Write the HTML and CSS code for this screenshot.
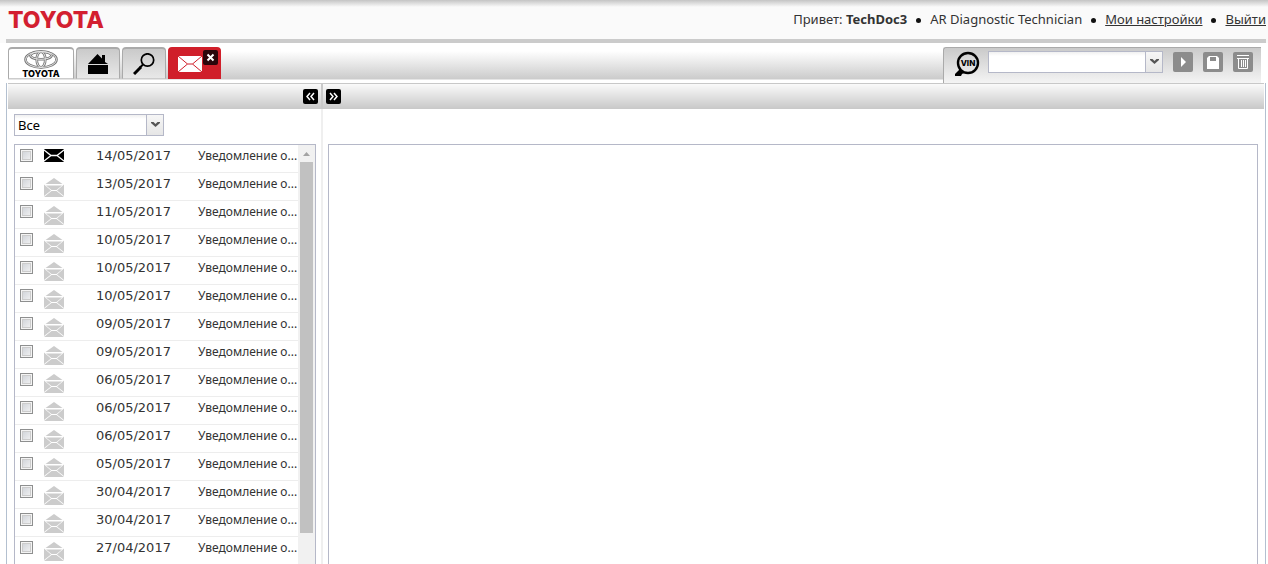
FILE: index.html
```html
<!DOCTYPE html>
<html lang="ru">
<head>
  <meta charset="UTF-8">
  <meta name="viewport" content="width=device-width, initial-scale=1.0">
  <title>Toyota TechDoc</title>
  <link rel="stylesheet" href="styles.css">
</head>
<body>

<svg class="sprite" aria-hidden="true">
  <symbol id="mail-new" viewBox="0 0 20 13">
    <rect width="20" height="13" rx="1"/>
    <path d="M0 1l7 5.500h6L20 1M0 12l7-5.500M20 12l-7-5.500" fill="none" stroke="#fff" stroke-width="1.300"/>
  </symbol>
  <symbol id="mail-read" viewBox="0 0 20 19">
    <path d="M10 0l8.500 6h-17z"/>
    <path d="M0 6.500L7 12.500 0 18zM20 6.500L13 12.500l7 5.500zM2 7.500h16L12.500 12h-5zM0 19l7.500-6h5L20 19z"/>
  </symbol>
  <symbol id="chevron" viewBox="0 0 9 6">
    <path d="M0 0h2.500l2 2 2-2H9v1L4.500 5 0 1z"/>
  </symbol>
</svg>

<header>
  <div class="logo">TOYOTA</div>
  <div class="user">
    <span>Привет: <strong>TechDoc3</strong></span>
    <i class="dot"></i>
    <span>AR Diagnostic Technician</span>
    <i class="dot"></i>
    <a href="#settings">Мои настройки</a>
    <i class="dot"></i>
    <a href="#logout">Выйти</a>
  </div>
</header>

<div class="toolbar">
  <nav class="tabs">
    <a class="tab tab-brand" href="#brand" aria-label="Toyota">
      <svg width="34" height="19" viewBox="0 0 34 19" fill="none">
        <g stroke="#777" stroke-width="2.600">
          <ellipse cx="17" cy="9.500" rx="15.500" ry="8"/>
          <ellipse cx="17" cy="5.500" rx="10.500" ry="3.800"/>
          <ellipse cx="17" cy="9.500" rx="4.300" ry="7.800"/>
        </g>
        <g stroke="#e4e4e4" stroke-width="1">
          <ellipse cx="17" cy="9.500" rx="15.500" ry="8"/>
          <ellipse cx="17" cy="5.500" rx="10.500" ry="3.800"/>
          <ellipse cx="17" cy="9.500" rx="4.300" ry="7.800"/>
        </g>
      </svg>
      <span>TOYOTA</span>
    </a>
    <a class="tab" href="#home" aria-label="Главная">
      <svg width="20" height="20" viewBox="0 0 20 20"><path d="M0 10L9.500 0l4.500 4.500V1h3v7l3 2zM0 11h20v9H0z"/></svg>
    </a>
    <a class="tab" href="#search" aria-label="Поиск">
      <svg width="22" height="22" viewBox="0 0 22 22" fill="none" stroke="#000">
        <circle cx="14.500" cy="7" r="6.200" stroke-width="1.700"/>
        <path d="M10 11.500L7 14.500" stroke-width="2"/>
        <path d="M8 14L1 21" stroke-width="3"/>
      </svg>
    </a>
    <div class="tab tab-active">
      <a href="#messages" aria-label="Сообщения">
        <svg width="24" height="16" viewBox="0 0 24 16">
          <path d="M0 0h24v16H0z" fill="#fff"/>
          <path d="M0 0l9.500 8h5L24 0M0 16l9.500-8M24 16l-9.500-8" fill="none" stroke="#d01f2a" stroke-width="1"/>
        </svg>
      </a>
      <button class="close" aria-label="Закрыть">
        <svg width="9" height="9" viewBox="0 0 9 9"><path d="M1.500 1.500l6 6M7.500 1.500l-6 6" stroke="#fff" stroke-width="2"/></svg>
      </button>
    </div>
  </nav>

  <form class="vin">
    <label for="vin-input" aria-label="VIN">
      <svg width="26" height="26" viewBox="0 0 26 26">
        <circle cx="14" cy="12" r="10" fill="none" stroke="#000" stroke-width="2.400"/>
        <path d="M5 17l5 5-2 1-1 2H1v-2l4-4z"/>
        <text x="14" y="15" text-anchor="middle">VIN</text>
      </svg>
    </label>
    <div class="combo">
      <input type="text" id="vin-input">
      <button type="button" aria-label="История VIN"><svg width="9" height="6"><use href="#chevron"/></svg></button>
    </div>
    <button type="button" class="tool" aria-label="Перейти">
      <svg width="20" height="20"><path d="M8 5v10l5-5z" fill="#fff"/></svg>
    </button>
    <button type="button" class="tool" aria-label="Сохранить">
      <svg width="20" height="20"><path d="M6 4h8l2 2v11H4V6zM7 5v4h6V5z" fill="#fff" fill-rule="evenodd"/></svg>
    </button>
    <button type="button" class="tool" aria-label="Удалить">
      <svg width="20" height="20" fill="none" stroke="#fff"><path d="M4 3.500h12M4 6.500h12M5.500 6v10.500h9V6M8.500 8v7M10.500 8v7M12.500 8v7"/></svg>
    </button>
  </form>
</div>

<main>
  <section class="side">
    <div class="pane-head">
      <button class="toggle" aria-label="Свернуть список">
        <svg width="15" height="15"><path d="M7 4L4 7.500 7 11M11 4L8 7.500l3 3.500" fill="none" stroke="#fff" stroke-width="1.500"/></svg>
      </button>
    </div>
    <div class="filter">
      <select aria-label="Фильтр">
        <option>Все</option>
      </select>
      <span class="filter-arrow"><svg width="9" height="6"><use href="#chevron"/></svg></span>
    </div>
    <div class="list">
      <table>
        <colgroup><col class="c-check"><col class="c-icon"><col class="c-date"><col></colgroup>
        <tbody id="messages"></tbody>
      </table>
      <div class="scrollbar">
        <svg width="7" height="4"><path d="M0 4L3.500 0 7 4z" fill="#a3a3a3"/></svg>
        <div class="thumb"></div>
      </div>
    </div>
  </section>

  <section class="content">
    <div class="pane-head">
      <button class="toggle" aria-label="Развернуть список">
        <svg width="15" height="15"><path d="M4 4l3 3.500L4 11M8 4l3 3.500L8 11" fill="none" stroke="#fff" stroke-width="1.500"/></svg>
      </button>
    </div>
    <div class="message"></div>
  </section>
</main>

<script>
  const dates = [
    '14/05/2017', '13/05/2017', '11/05/2017', '10/05/2017', '10/05/2017',
    '10/05/2017', '09/05/2017', '09/05/2017', '06/05/2017', '06/05/2017',
    '06/05/2017', '05/05/2017', '30/04/2017', '30/04/2017', '27/04/2017'
  ];

  document.getElementById('messages').innerHTML = dates.map((date, i) => `
    <tr>
      <td><input type="checkbox" aria-label="Выбрать ${date}"></td>
      <td>${i === 0
        ? '<svg class="mail-new" width="20" height="13"><use href="#mail-new"/></svg>'
        : '<svg class="mail-read" width="20" height="19"><use href="#mail-read"/></svg>'}</td>
      <td class="date">${date}</td>
      <td class="subject">Уведомление о...</td>
    </tr>
  `).join('');
</script>

</body>
</html>
```
FILE: styles.css
```css
* { box-sizing: border-box; }
body {
  margin: 0;
  height: 100vh;
  overflow: hidden;
  display: flex;
  flex-direction: column;
  background: #fff;
  color: #333;
  font-family: 'Noto Sans', Tahoma, sans-serif;
  font-size: 13px;
}
a { color: inherit; }
svg { display: block; }
button {
  border: none;
  padding: 0;
  cursor: pointer;
}
.sprite { position: absolute; width: 0; height: 0; }

header {
  flex: none;
  height: 43px;
  display: flex;
  justify-content: space-between;
  padding: 0 2px 0 6px;
  background: linear-gradient(#c4c4c4, #fafafa 7px);
  position: relative;
}
header::after {
  content: '';
  position: absolute;
  left: 6px; right: 2px; bottom: 0;
  height: 4px;
  background: #cbcbcb;
}
.logo {
  padding-left: 2px;
  font: 800 23px/40px Inter, sans-serif;
  color: #d31f30;
}
.user {
  display: flex;
  align-items: center;
  height: 38px;
}
.dot {
  width: 5px; height: 5px;
  margin: 2px 9px 0;
  border-radius: 50%;
  background: #111;
}

.toolbar {
  flex: none;
  display: flex;
  justify-content: space-between;
  align-items: flex-start;
  height: 40px;
  margin: 0 7px 0 8px;
  padding-top: 4px;
  background: linear-gradient(#fff 8px, #cbcbcb 36px, #fff 37px);
}
.tabs {
  display: flex;
  gap: 2px;
}
.tab {
  display: flex;
  align-items: center;
  justify-content: center;
  width: 44px; height: 32px;
  border: 1px solid #aaa;
  border-top-width: 2px;
  border-bottom-color: #ccc;
  border-radius: 4px 4px 0 0;
  background: linear-gradient(#cacaca, #e8e8e8);
}
.tab-brand {
  flex-direction: column;
  width: 66px;
  background: #fff;
  text-decoration: none;
  font: 800 9px/9px Inter, sans-serif;
  color: #000;
}
.tab-active {
  position: relative;
  width: 53px;
  padding-right: 9px;
  border-color: #d01f2a;
  background: #d01f2a;
}
.close {
  position: absolute;
  top: 1px; right: 2px;
  display: grid;
  place-items: center;
  width: 15px; height: 15px;
  border-radius: 2px;
  background: #2b060b;
}

.vin {
  display: flex;
  align-items: flex-start;
  gap: 10px;
  height: 36px;
  padding: 3px 8px 0 10px;
  border-top: 1px solid #aaa;
  border-left: 1px solid #aaa;
  border-radius: 3px 0 0 0;
  background: linear-gradient(#cacaca, #f4f4f4);
}
.vin text { font: 800 8px Inter, sans-serif; }
.vin label { margin-right: -2px; }
.combo {
  display: flex;
  width: 175px; height: 22px;
  border: 1px solid #b5b8c8;
}
.combo input {
  flex: 1;
  min-width: 0;
  border: none;
  background: linear-gradient(#f0f0f0, #fff 4px);
}
.combo button,
.filter-arrow {
  display: grid;
  place-items: center;
  width: 17px;
  border-left: 1px solid #b5b8c8;
  background: linear-gradient(#f6f6f6, #e6e6e6);
}
#chevron { fill: #555; }
.tool {
  width: 20px; height: 20px;
  margin-top: 1px;
  border-radius: 2px;
  background: #8c8c8c;
}

main {
  flex: 1;
  min-height: 0;
  display: flex;
  margin: 0 2px 0 6px;
  border-left: 1px solid #b3c0d0;
  border-right: 1px solid #b3c0d0;
  padding: 0 1px;
}
.side {
  flex: none;
  display: flex;
  flex-direction: column;
  width: 315px;
  border-right: 2px solid #efefef;
}
.content {
  flex: 1;
  display: flex;
  flex-direction: column;
}
.pane-head {
  flex: none;
  display: flex;
  align-items: center;
  height: 26px;
  padding: 0 3px;
  border-top: 1px solid #c8c8c8;
  background: linear-gradient(#fafafa, #c8c8c8);
}
.side .pane-head {
  justify-content: flex-end;
  margin-right: -2px;
  border-right: 2px solid #c8c8c8;
}
.toggle {
  width: 15px; height: 15px;
  border-radius: 2px;
  background: #000;
}

.filter {
  position: relative;
  width: 150px; height: 22px;
  margin: 5px 0 8px 6px;
}
.filter select {
  width: 100%; height: 100%;
  padding: 0 20px 0 3px;
  border: 1px solid #b5b8c8;
  border-radius: 0;
  appearance: none;
  background: linear-gradient(#f0f0f0, #fff 4px);
  font: inherit;
  color: #000;
}
.filter-arrow {
  position: absolute;
  top: 1px; right: 1px; bottom: 1px;
  pointer-events: none;
}

.list {
  flex: 1;
  min-height: 0;
  overflow: hidden;
  display: flex;
  align-items: flex-start;
  margin: 0 5px 0 6px;
  border: 1px solid #b5b8c8;
  border-bottom: none;
}
table {
  flex: 1;
  width: 0;
  table-layout: fixed;
  border-spacing: 0;
}
.c-check { width: 29px; }
.c-icon { width: 52px; }
.c-date { width: 102px; }
td {
  padding: 0;
  height: 28px;
  border-bottom: 1px solid #ededed;
  line-height: 22px;
  vertical-align: top;
  white-space: nowrap;
}
td input {
  appearance: none;
  display: block;
  width: 13px; height: 13px;
  margin: 4px 0 0 5px;
  border: 1px solid #8e8f8f;
  background: linear-gradient(135deg, #cbcfd5, #f6f6f6);
  box-shadow: inset 0 0 0 1px #f4f4f4, inset 0 0 0 2px #ccc;
}
.date { font-family: 'DejaVu Sans', Verdana, sans-serif; }
.subject { font-size: 12px; }
.mail-new { margin-top: 4px; fill: #000; }
.mail-read { margin-top: 5px; fill: #ccc; }

.scrollbar {
  flex: none;
  align-self: stretch;
  display: flex;
  flex-direction: column;
  align-items: center;
  width: 17px;
  padding-top: 7px;
  background: #f1f1f1;
}
.thumb {
  width: 13px;
  height: 90%;
  margin-top: 6px;
  background: #c1c1c1;
}

.message {
  flex: 1;
  margin: 35px 6px 0 5px;
  border: 1px solid #b5b8c8;
  border-bottom: none;
}
```
